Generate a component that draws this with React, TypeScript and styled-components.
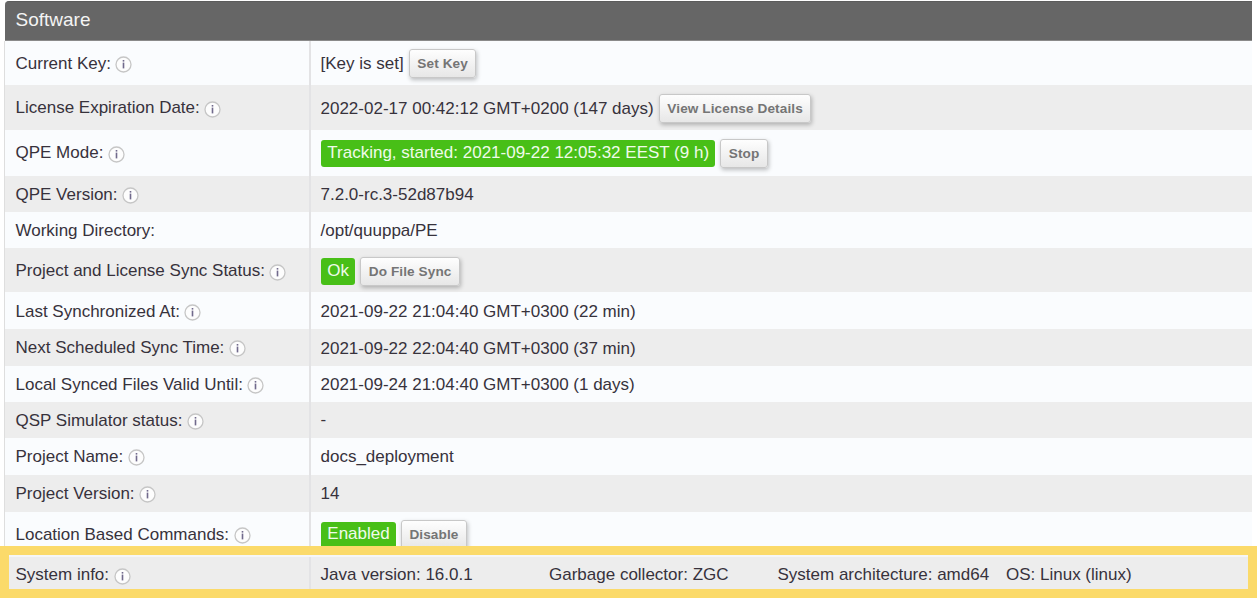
import React from "react";
import styled, { createGlobalStyle } from "styled-components";

const GlobalStyle = createGlobalStyle`
  html, body { margin: 0; padding: 0; background: #fff; overflow: hidden; }
  * { box-sizing: border-box; }
`;

const Page = styled.main`
  position: relative;
  width: 1257px;
  height: 598px;
  padding: 1px 5px 0 4px;
  overflow: hidden;
  font-family: "Liberation Sans", Arial, sans-serif;
  font-size: 17px;
  color: #37323c;
`;

const Header = styled.h2`
  display: flex;
  align-items: center;
  height: 40px;
  margin: 0 0 0 1px;
  padding: 0 0 2px 10.5px;
  font-size: 19px;
  font-weight: 400;
  color: #f4f4f4;
  background: #666;
  border: 1px solid #5c5c5c;
  border-left: 0;
  border-right: 0;
  border-bottom-color: #8a8a8a;
  border-radius: 4px 0 0 0;
`;

const Panel = styled.section`
  border-left: 1px solid #dedede;
`;

const Row = styled.div<{ $height: number; $shaded: boolean }>`
  display: grid;
  grid-template-columns: 306px 1fr;
  height: ${(p) => p.$height}px;
  background: ${(p) => (p.$shaded ? "#ededed" : "#fafcfe")};
`;

const Label = styled.div<{ $drop: number }>`
  display: flex;
  align-items: center;
  padding: ${(p) => p.$drop}px 0 0 10.5px;
  border-right: 2px solid #e3e3e5;
  white-space: nowrap;
`;

const Value = styled.div<{ $drop: number }>`
  display: flex;
  align-items: center;
  padding: ${(p) => p.$drop}px 0 0 9.5px;
  white-space: nowrap;
`;

const Text = styled.span<{ $beside: boolean }>`
  padding-top: ${(p) => (p.$beside ? 1 : 0)}px;
`;

const Info = styled.svg`
  width: 17px;
  height: 17px;
  margin: 2px 0 0 4.5px;
  flex: none;
`;

const Badge = styled.span`
  display: flex;
  align-items: center;
  height: 27px;
  padding: 0 6px 2px 6.3px;
  margin: 1px 0 0 0.5px;
  color: #effbea;
  background: #48bf17;
  border-radius: 3px;
`;

const Button = styled.button`
  height: 29px;
  margin: 0 0 0 5.2px;
  padding: 0 7.5px;
  font: bold 13.6px "Liberation Sans", Arial, sans-serif;
  letter-spacing: 0.1px;
  color: #757575;
  background: linear-gradient(#fefefe, #e7e7e7);
  border: 1px solid #c8c8c8;
  border-radius: 3px;
  box-shadow: 1px 2px 4px rgba(0, 0, 0, 0.25);
`;

const SystemInfo = styled.div`
  display: grid;
  grid-template-columns: repeat(4, 228.5px);
`;

const Highlight = styled.div`
  position: absolute;
  left: 0;
  top: 546px;
  width: 1257px;
  height: 52px;
  border: 9px solid #fbda6a;
  box-shadow: inset 0 2px 0 #f5f6f7;
`;

const InfoIcon = () => (
  <Info viewBox="0 0 17 17" aria-label="Info">
    <circle cx="8.5" cy="8.5" r="7.5" fill="#fdfdfd" stroke="#c6c6c6" strokeWidth="1.3" />
    <path d="M8.5 6.6v5.8" stroke="#716a8c" strokeWidth="1.6" />
    <path d="M8.5 4v1.6" stroke="#716a8c" strokeWidth="1.6" />
  </Info>
);

type Entry = {
  label: string;
  height: number;
  labelDrop?: number;
  valueDrop?: number;
  info?: boolean;
  text?: string;
  badge?: string;
  action?: string;
  columns?: string[];
};

const entries: Entry[] = [
  { label: "Current Key:", height: 44, labelDrop: 1, text: "[Key is set]", action: "Set Key" },
  { label: "License Expiration Date:", height: 45, labelDrop: 1, valueDrop: 1, text: "2022-02-17 00:42:12 GMT+0200 (147 days)", action: "View License Details" },
  { label: "QPE Mode:", height: 46, badge: "Tracking, started: 2021-09-22 12:05:32 EEST (9 h)", action: "Stop" },
  { label: "QPE Version:", height: 36, labelDrop: 1, valueDrop: 1, text: "7.2.0-rc.3-52d87b94" },
  { label: "Working Directory:", height: 36, labelDrop: 2, valueDrop: 2, info: false, text: "/opt/quuppa/PE" },
  { label: "Project and License Sync Status:", height: 44, labelDrop: 2, valueDrop: 2, badge: "Ok", action: "Do File Sync" },
  { label: "Last Synchronized At:", height: 37, labelDrop: 2, valueDrop: 2, text: "2021-09-22 21:04:40 GMT+0300 (22 min)" },
  { label: "Next Scheduled Sync Time:", height: 37, valueDrop: 2, text: "2021-09-22 22:04:40 GMT+0300 (37 min)" },
  { label: "Local Synced Files Valid Until:", height: 36, labelDrop: 1, valueDrop: 2, text: "2021-09-24 21:04:40 GMT+0300 (1 days)" },
  { label: "QSP Simulator status:", height: 36, labelDrop: 1, text: "-" },
  { label: "Project Name:", height: 37, text: "docs_deployment" },
  { label: "Project Version:", height: 37, text: "14" },
  { label: "Location Based Commands:", height: 45, badge: "Enabled", action: "Disable" },
  {
    label: "System info:",
    height: 36,
    columns: ["Java version: 16.0.1", "Garbage collector: ZGC", "System architecture: amd64", "OS: Linux (linux)"],
  },
];

export default function App() {
  return (
    <>
      <GlobalStyle />
      <Page>
        <Header>Software</Header>
        <Panel>
          {entries.map((e, i) => (
            <Row key={e.label} $height={e.height} $shaded={i % 2 === 1}>
              <Label $drop={e.labelDrop ?? 0}>
                <span>{e.label}</span>
                {e.info !== false && <InfoIcon />}
              </Label>
              <Value $drop={e.valueDrop ?? 0}>
                {e.text && <Text $beside={!!e.action}>{e.text}</Text>}
                {e.badge && <Badge>{e.badge}</Badge>}
                {e.action && <Button>{e.action}</Button>}
                {e.columns && (
                  <SystemInfo>
                    {e.columns.map((c) => (
                      <span key={c}>{c}</span>
                    ))}
                  </SystemInfo>
                )}
              </Value>
            </Row>
          ))}
        </Panel>
        <Highlight />
      </Page>
    </>
  );
}
